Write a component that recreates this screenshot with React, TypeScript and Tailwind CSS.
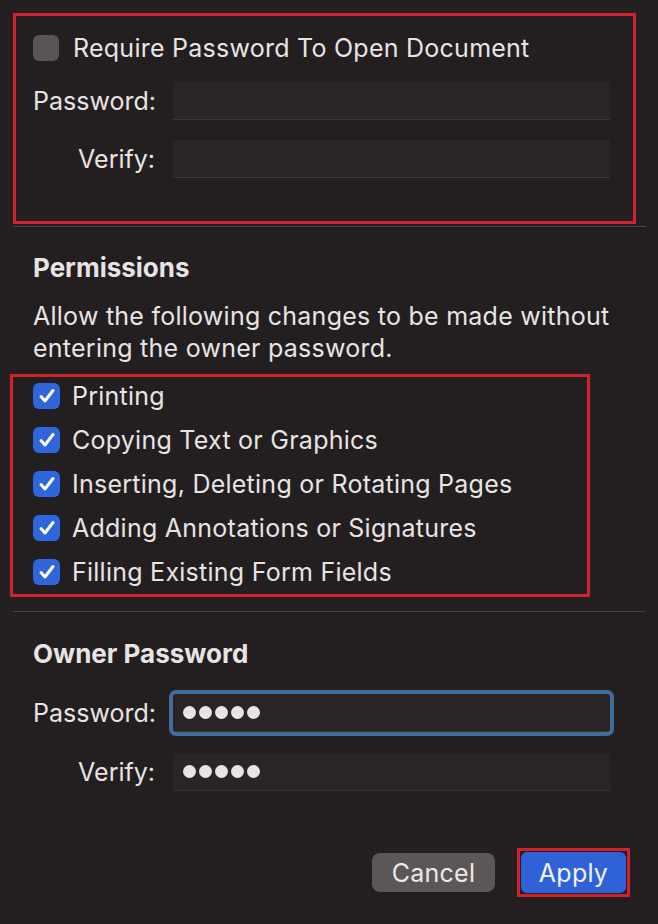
import React from 'react';

const permissions = [
  'Printing',
  'Copying Text or Graphics',
  'Inserting, Deleting or Rotating Pages',
  'Adding Annotations or Signatures',
  'Filling Existing Form Fields',
];

function Checked() {
  return (
    <span className="flex h-[26px] w-[27px] shrink-0 items-center justify-center rounded-[6px] bg-[#2f66dc]">
      <svg width="22" height="22" viewBox="0 0 22 22" fill="none">
        <path d="M5 11.5l4 4.5L17 5.5" stroke="white" strokeWidth="3" strokeLinecap="round" strokeLinejoin="round" />
      </svg>
    </span>
  );
}

function Dots() {
  return (
    <div className="flex gap-[3px] pl-[10px]">
      {[0, 1, 2, 3, 4].map((i) => (
        <span key={i} className="h-[13px] w-[13px] rounded-full bg-[#e8e4e4]" />
      ))}
    </div>
  );
}

function Field({ label, children, focused }: { label: string; children?: React.ReactNode; focused?: boolean }) {
  return (
    <div className="flex items-center">
      <span className="w-[122px] whitespace-nowrap text-right tracking-normal">{label}</span>
      <div
        className={`ml-[18px] flex h-[38px] w-[437px] items-center border-b border-[#3b3536] bg-[#2a2425] ${
          focused ? 'rounded-[3px] ring-[4px] ring-[#426c9c]' : ''
        }`}
      >
        {children}
      </div>
    </div>
  );
}

export default function App() {
  return (
    <div className="h-[924px] w-[658px] overflow-hidden bg-[#231e1f] pt-[13px] font-['Inter',sans-serif] text-[25px] leading-[32px] tracking-[0.25px] text-[#e8e4e4]">
      <div className="ml-[13px] h-[211px] w-[623px] border-[3px] border-[#d1212c] pl-[17px] pt-[19px]">
        <div className="flex h-[26px] items-center gap-[14px]">
          <span className="h-[26px] w-[26px] rounded-[6px] bg-[#5a5455]" />
          <span>Require Password To Open Document</span>
        </div>
        <div className="mt-[21px]">
          <Field label="Password:" />
        </div>
        <div className="mt-[20px]">
          <Field label="Verify:" />
        </div>
      </div>
      <div className="ml-[13px] mt-[2px] h-px w-[633px] bg-[#4a4445]" />

      <div className="ml-[33px] mt-[25px] text-[26px] font-bold tracking-normal">Permissions</div>
      <p className="ml-[33px] mt-[16px] w-[590px]">
        Allow the following changes to be made without entering the owner password.
      </p>

      <div className="ml-[10px] mt-[10px] flex h-[223px] w-[580px] flex-col gap-[18px] border-[3px] border-[#d1212c] pl-[20px] pt-[6px]">
        {permissions.map((p) => (
          <div key={p} className="flex h-[26px] items-center gap-[12px]">
            <Checked />
            <span>{p}</span>
          </div>
        ))}
      </div>
      <div className="ml-[13px] mt-[14px] h-px w-[632px] bg-[#4a4445]" />

      <div className="ml-[33px] mt-[26px] text-[26px] font-bold tracking-normal">Owner Password</div>
      <div className="ml-[33px] mt-[24px]">
        <Field label="Password:" focused>
          <Dots />
        </Field>
      </div>
      <div className="ml-[33px] mt-[21px]">
        <Field label="Verify:">
          <Dots />
        </Field>
      </div>

      <div className="mt-[57px] flex items-center justify-end pr-[28px]">
        <button className="h-[39px] w-[123px] rounded-[8px] bg-[#5c5657] text-[#ece8e8]">Cancel</button>
        <div className="ml-[22px] h-[49px] w-[113px] border-[3px] border-[#d1212c] p-[1px]">
          <button className="h-full w-full rounded-[6px] bg-[#2e62d6] text-[#f2f2f6]">Apply</button>
        </div>
      </div>
    </div>
  );
}
